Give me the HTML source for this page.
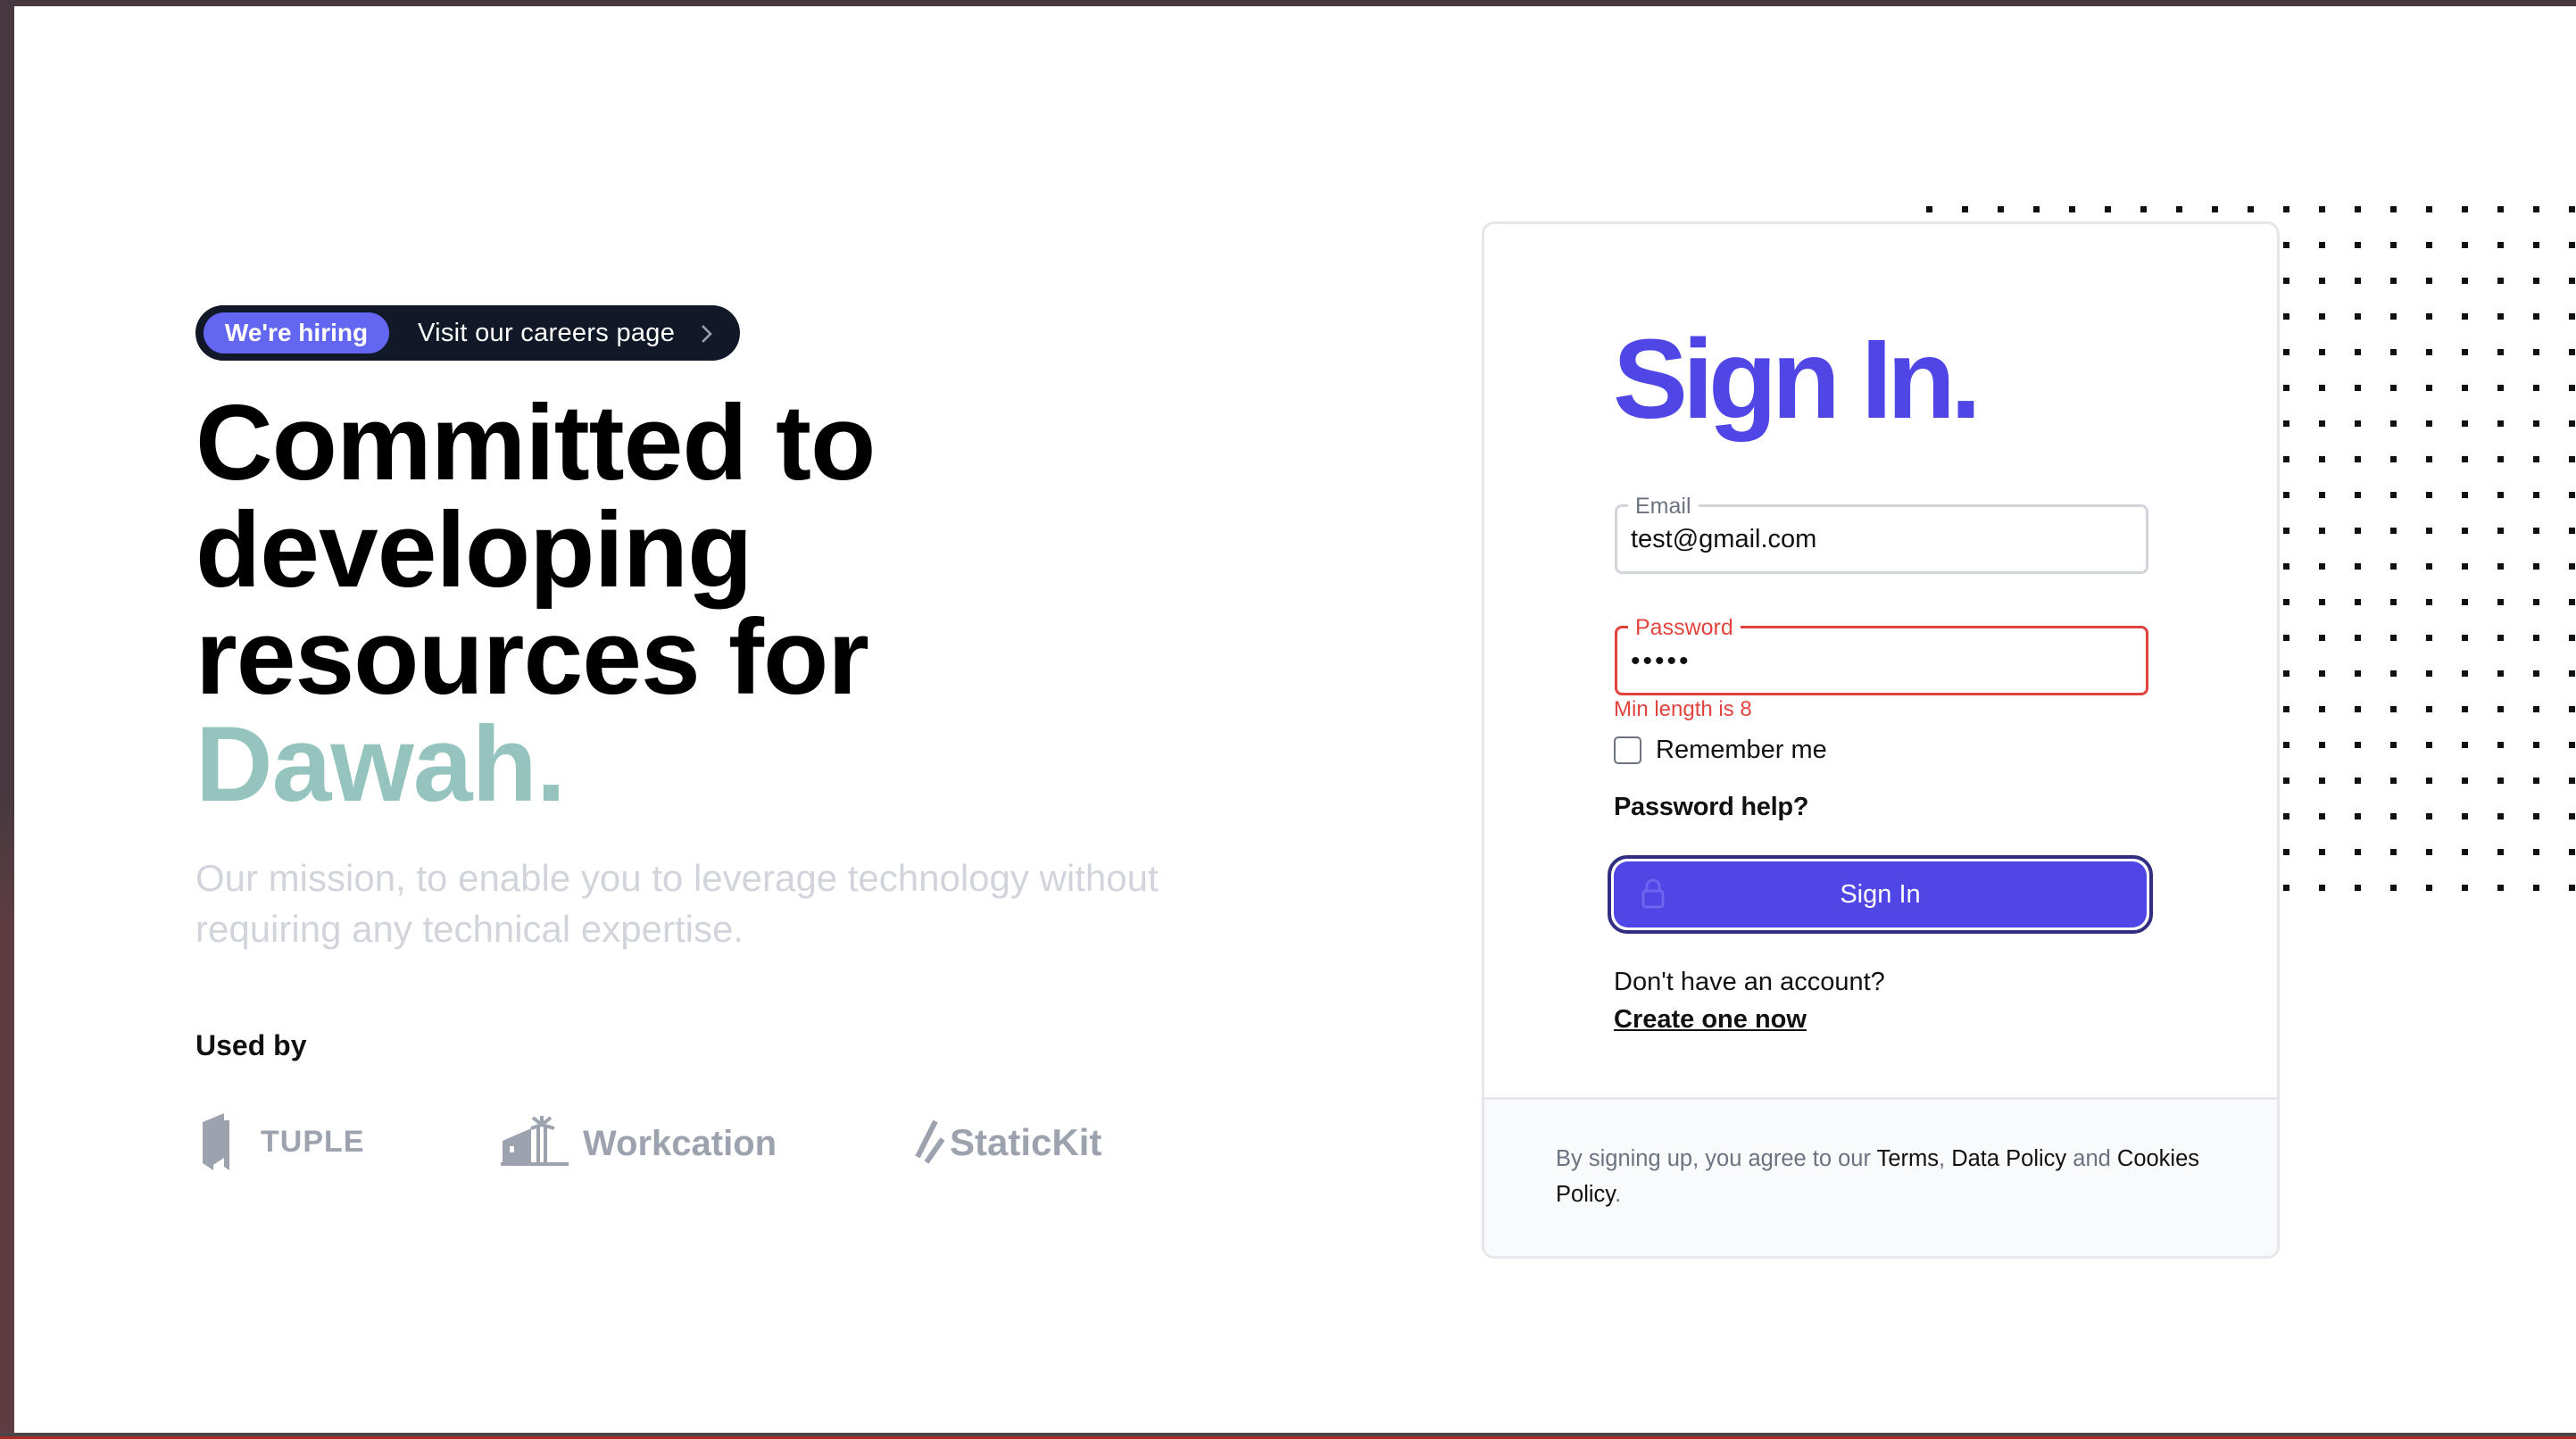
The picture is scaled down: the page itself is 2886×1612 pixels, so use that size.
<!DOCTYPE html>
<html><head><meta charset="utf-8">
<style>
*{margin:0;padding:0;box-sizing:border-box}
body{width:2886px;height:1612px;overflow:hidden;background:#fff;font-family:"Liberation Sans",sans-serif;position:relative}
.a{position:absolute;white-space:nowrap}
</style></head><body>
<div class="a" style="left:0;top:0;width:2886px;height:7px;background:#47393f"></div>
<div class="a" style="left:0;top:0;width:16px;height:1612px;background:linear-gradient(#47393f 0,#47393f 55%,#5e3d42 65%,#5e3d42 100%)"></div>
<div class="a" style="left:0;top:1605px;width:2886px;height:4px;background:#4a4347"></div>
<div class="a" style="left:0;top:1609px;width:2886px;height:3px;background:#a52a26"></div>

<svg class="a" style="left:2150px;top:224px" width="736" height="790">
<defs><pattern id="p" x="0" y="0" width="40" height="40" patternUnits="userSpaceOnUse"><rect x="8" y="7" width="7" height="7" fill="#111"/></pattern></defs>
<rect x="0" y="0" width="736" height="40" fill="url(#p)"/>
<rect x="400" y="40" width="336" height="750" fill="url(#p)"/>
</svg>

<div class="a" style="left:219px;top:342px;width:610px;height:62px;background:#111827;border-radius:31px"></div>
<div class="a" style="left:228px;top:350px;width:208px;height:46px;background:#6366f1;border-radius:23px;color:#fff;font-size:28px;font-weight:bold;line-height:46px;text-align:center">We're hiring</div>
<div class="a" style="left:468px;top:350px;color:#fff;font-size:29px;line-height:46px;letter-spacing:0.3px">Visit our careers page</div>
<svg class="a" style="left:782px;top:360px" width="20" height="28"><path d="M5 5l9 9-9 9" stroke="#9ca3af" stroke-width="2.5" fill="none"/></svg>

<div class="a" style="left:219px;top:436px;font-size:120px;font-weight:bold;line-height:120px;letter-spacing:-1px;color:#000">Committed to<br>developing<br>resources for<br><span style="color:#94c4bd">Dawah.</span></div>

<div class="a" style="left:219px;top:955px;font-size:42px;line-height:57px;color:#d1d5db;white-space:normal;width:1150px">Our mission, to enable you to leverage technology without requiring any technical expertise.</div>

<div class="a" style="left:219px;top:1153px;font-size:32px;font-weight:bold;color:#111">Used by</div>

<svg class="a" style="left:225px;top:1245px" width="40" height="68"><path d="M2 12L26 2V52L14 60V66L2 58Z M26 10h6v56l-6-4" fill="#9ca3af"/></svg>
<div class="a" style="left:292px;top:1260px;font-size:34px;font-weight:bold;color:#9ca3af;letter-spacing:1px">TUPLE</div>
<svg class="a" style="left:561px;top:1250px" width="76" height="56"><path d="M2 28L34 14V54H2Z M8 42h8v10h-8z" fill="#9ca3af"/><rect x="10" y="34" width="5" height="7" fill="#fff"/><rect x="40" y="10" width="4" height="44" fill="#9ca3af"/><rect x="48" y="10" width="4" height="44" fill="#9ca3af"/><path d="M46 10L36 2M46 10L56 2M46 10L34 14M46 10L60 14M46 10V0" stroke="#9ca3af" stroke-width="4"/><rect x="0" y="52" width="76" height="4" fill="#9ca3af"/></svg>
<div class="a" style="left:653px;top:1259px;font-size:40px;color:#9ca3af;font-weight:bold">Workcation</div>
<svg class="a" style="left:1022px;top:1254px" width="40" height="50"><path d="M26 2L6 42M34 22L16 48" stroke="#9ca3af" stroke-width="6"/></svg>
<div class="a" style="left:1064px;top:1256px;font-size:42px;font-weight:bold;color:#9ca3af">StaticKit</div>

<div class="a" style="left:1660px;top:248px;width:894px;height:1162px;border:3px solid #e5e7eb;border-radius:14px;background:#fff;overflow:hidden">
 <div class="a" style="left:0;top:978px;width:894px;height:200px;background:#f9fafb;border-top:3px solid #e5e7eb"></div>
</div>
<div class="a" style="left:1807px;top:350px;font-size:126px;font-weight:bold;color:#4f46e5;letter-spacing:-6px;line-height:150px">Sign In.</div>

<div class="a" style="left:1809px;top:565px;width:598px;height:78px;border:3px solid #d1d5db;border-radius:8px"></div>
<div class="a" style="left:1824px;top:553px;background:#fff;padding:0 8px;font-size:25px;color:#6b7280">Email</div>
<div class="a" style="left:1827px;top:588px;font-size:29px;color:#111">test@gmail.com</div>

<div class="a" style="left:1809px;top:701px;width:598px;height:78px;border:3px solid #e0443c;border-radius:8px"></div>
<div class="a" style="left:1824px;top:689px;background:#fff;padding:0 8px;font-size:25px;color:#e0443c">Password</div>
<div class="a" style="left:1827px;top:724px;font-size:30px;color:#111;letter-spacing:3px">•••••</div>
<div class="a" style="left:1808px;top:781px;font-size:24px;color:#e0443c">Min length is 8</div>

<div class="a" style="left:1808px;top:825px;width:31px;height:31px;border:2px solid #6b7280;border-radius:5px"></div>
<div class="a" style="left:1855px;top:824px;font-size:29px;color:#111">Remember me</div>
<div class="a" style="left:1808px;top:888px;font-size:29px;font-weight:bold;color:#111;letter-spacing:-0.3px">Password help?</div>

<div class="a" style="left:1801px;top:958px;width:611px;height:88px;border:4px solid #312e81;border-radius:22px;background:#fff"></div>
<div class="a" style="left:1808px;top:965px;width:597px;height:74px;background:#4f46e5;border-radius:16px;color:#fff;font-size:29px;line-height:74px;text-align:center">Sign In</div>
<svg class="a" style="left:1838px;top:983px" width="28" height="36"><path d="M7 15V10a7 7 0 0114 0v5" stroke="#6d66ee" stroke-width="3" fill="none"/><rect x="3" y="15" width="22" height="18" rx="3" stroke="#6d66ee" stroke-width="3" fill="none"/></svg>

<div class="a" style="left:1808px;top:1084px;font-size:29px;color:#111">Don't have an account?</div>
<div class="a" style="left:1808px;top:1126px;font-size:29px;font-weight:bold;color:#111;text-decoration:underline">Create one now</div>

<div class="a" style="left:1743px;top:1278px;font-size:25.5px;line-height:40px;color:#6b7280;white-space:normal;width:740px">By signing up, you agree to our <span style="color:#111">Terms</span>, <span style="color:#111">Data Policy</span> and <span style="color:#111">Cookies Policy</span>.</div>
</body></html>
